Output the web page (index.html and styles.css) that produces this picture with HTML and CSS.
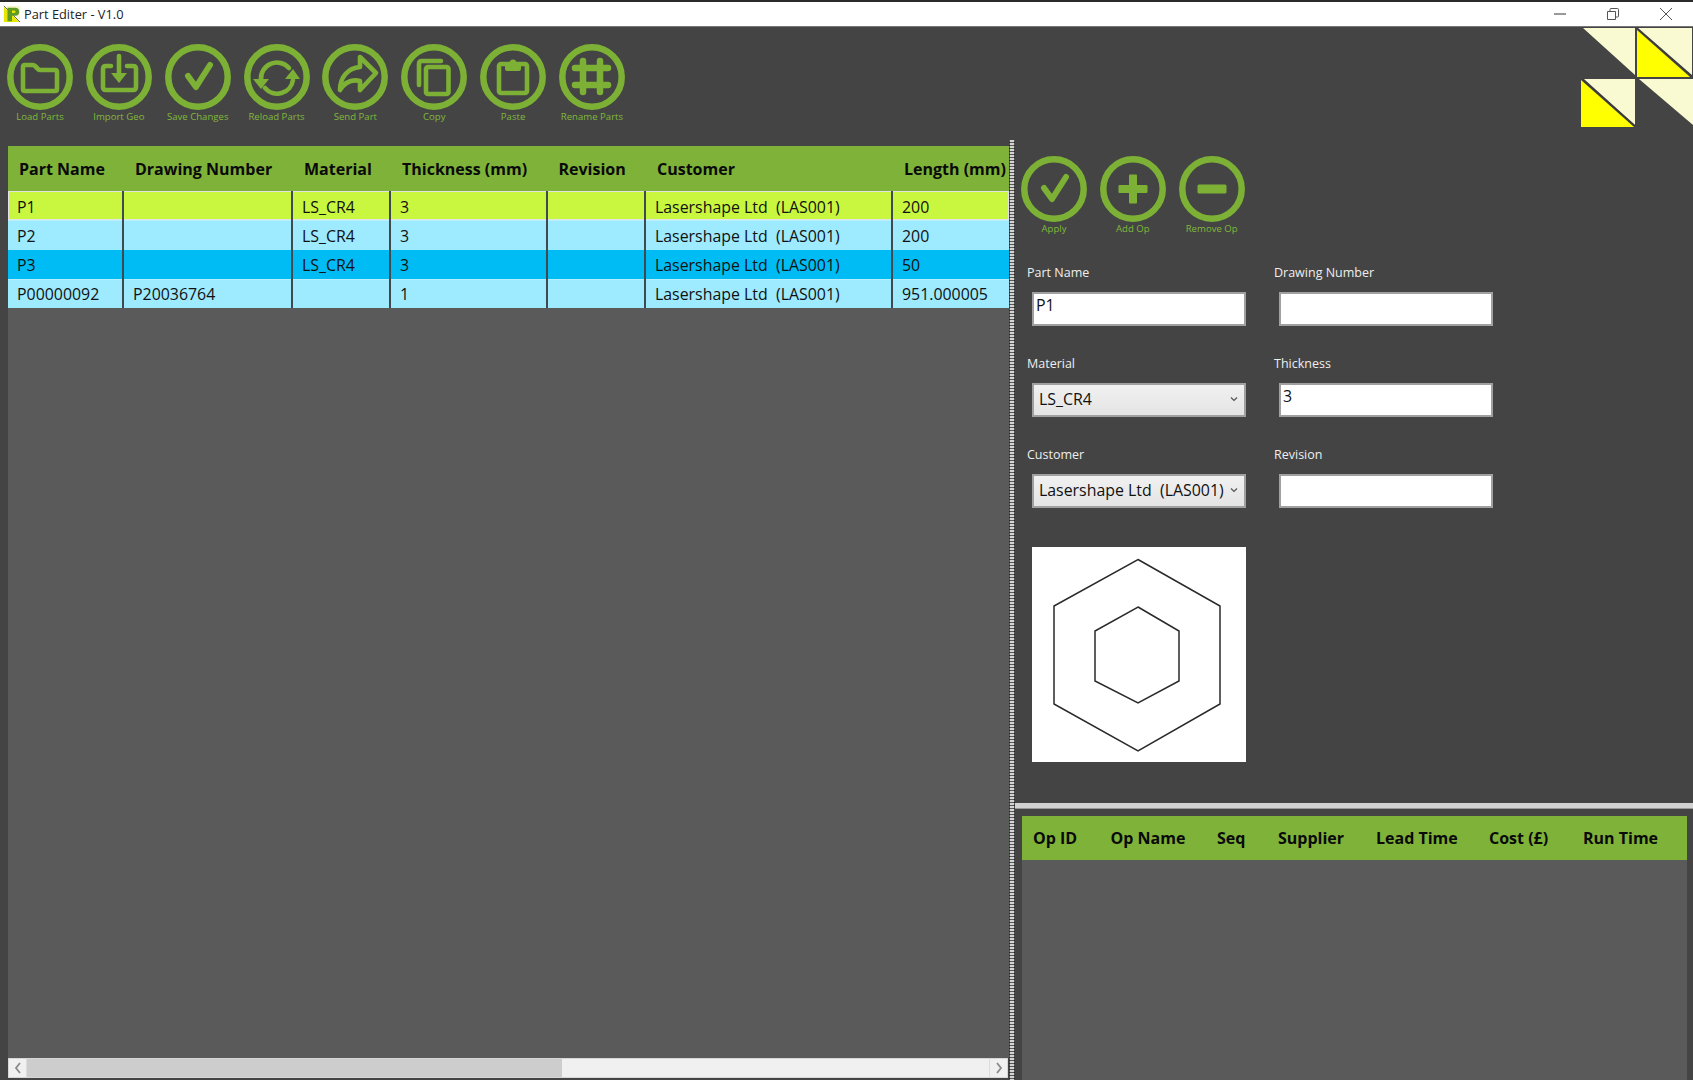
FILE: index.html
```html
<!DOCTYPE html>
<html lang="en">
<head>
<meta charset="utf-8">
<title>Part Editer - V1.0</title>
<link rel="stylesheet" href="styles.css">
</head>
<body>
<div class="window">
  <header class="titlebar">
    <svg class="app-icon" viewBox="0 0 20 20" aria-hidden="true">
      <path d="M1 2 18 19H1Z" fill="#e6e600"/>
      <path d="M3 1H19V17Z" fill="#f5f5c8"/>
      <path d="M1 1 19 19" stroke="#555" stroke-width="1"/>
      <path d="M5 3h8.500a4.500 4.500 0 0 1 0 9H10V18H5Z" fill="#5f9a25"/>
      <path d="M10 6h2.500a1.300 1.300 0 0 1 0 2.800H10Z" fill="#e6e600"/>
    </svg>
    <span class="title-text">Part Editer - V1.0</span>
    <div class="win-buttons">
      <svg class="win-btn" viewBox="0 0 12 12"><path d="M0 6H12" stroke="#777" stroke-width="1.500" fill="none"/></svg>
      <svg class="win-btn" viewBox="0 0 12 12"><path d="M.5 3.500H8.500V11.500H.5ZM3 3.500V1.500Q3 .5 4 .5H10.500Q11.500 .5 11.500 1.500V8Q11.500 9 10.500 9H8.500" stroke="#555" fill="none"/></svg>
      <svg class="win-btn" viewBox="0 0 12 12"><path d="M0 0 12 12M12 0 0 12" stroke="#555" fill="none"/></svg>
    </div>
  </header>

  <section class="toolbar">
    <div class="tool">
      <svg class="tool-icon" viewBox="0 0 66 66"><circle class="ring" cx="33" cy="33" r="29.700"/><path class="line" d="M16 45V23Q16 21 18 21H26Q27 21 28 22L31 25Q32 26 33 26H48Q50 26 50 28V45Q50 47 48 47H18Q16 47 16 45Z"/></svg>
      <span class="tool-label">Load Parts</span>
    </div>
    <div class="tool">
      <svg class="tool-icon" viewBox="0 0 66 66"><circle class="ring" cx="33" cy="33" r="29.700"/><path class="line" d="M25 22H20Q17 22 17 25V43Q17 46 20 46H47Q50 46 50 43V25Q50 22 47 22H41"/><path class="line" d="M33 12V30"/><path class="solid" d="M25 29H41L33 39Z"/></svg>
      <span class="tool-label">Import Geo</span>
    </div>
    <div class="tool">
      <svg class="tool-icon" viewBox="0 0 66 66"><circle class="ring" cx="33" cy="33" r="29.700"/><path class="check" d="M23 32 31 43 45 21"/></svg>
      <span class="tool-label">Save Changes</span>
    </div>
    <div class="tool">
      <svg class="tool-icon" viewBox="0 0 66 66"><circle class="ring" cx="33" cy="33" r="29.700"/><path class="line" d="M17 36A16 16 0 0 1 45 24"/><path class="line" d="M49 36A16 16 0 0 1 21 44"/><path class="solid" d="M9 35H25L17 45Z"/><path class="solid" d="M41 35H56L49 25Z"/></svg>
      <span class="tool-label">Reload Parts</span>
    </div>
    <div class="tool">
      <svg class="tool-icon" viewBox="0 0 66 66"><circle class="ring" cx="33" cy="33" r="29.700"/><path class="line" d="M38 13 54 29 38 46V37C30 35 23 38 18 46 18 33 26 24 38 23Z"/></svg>
      <span class="tool-label">Send Part</span>
    </div>
    <div class="tool">
      <svg class="tool-icon" viewBox="0 0 66 66"><circle class="ring" cx="33" cy="33" r="29.700"/><rect class="line" x="25" y="23" width="22.500" height="27" rx="2"/><path class="line" d="M18 41V20Q18 17 21 17H40"/></svg>
      <span class="tool-label">Copy</span>
    </div>
    <div class="tool">
      <svg class="tool-icon" viewBox="0 0 66 66"><circle class="ring" cx="33" cy="33" r="29.700"/><rect class="line" x="19" y="20" width="28" height="29" rx="2"/><path class="solid" d="M25 19H29.500A3.500 3.500 0 0 1 36.500 19H41V25Q41 27 39 27H27Q25 27 25 25Z"/></svg>
      <span class="tool-label">Paste</span>
    </div>
    <div class="tool">
      <svg class="tool-icon" viewBox="0 0 66 66"><circle class="ring" cx="33" cy="33" r="29.700"/><path class="hash" d="M24 17V48M41 17V48M16 24H49M16 41H49"/></svg>
      <span class="tool-label">Rename Parts</span>
    </div>
    <svg class="logo" viewBox="0 0 112 100" aria-hidden="true">
      <path d="M2 1H54V48Z" fill="#fafad2"/>
      <path d="M56 1H111V49Z" fill="#fafad2"/>
      <path d="M56 3V50H109Z" fill="#ffff00"/>
      <path d="M56 1 111 49" stroke="#3a3a3a" stroke-width="1.500"/>
      <path d="M3 52H54V98Z" fill="#fafad2"/>
      <path d="M0 53V100H53Z" fill="#ffff00"/>
      <path d="M1 52 54 99" stroke="#3a3a3a" stroke-width="1.500"/>
      <path d="M58 52H112V98Z" fill="#fafad2"/>
    </svg>
  </section>

  <main class="workspace">
    <section class="parts-pane">
      <div class="grid-area">
        <div class="parts-row grid-head">
          <div class="head-cell">Part Name</div>
          <div class="head-cell">Drawing Number</div>
          <div class="head-cell">Material</div>
          <div class="head-cell">Thickness (mm)</div>
          <div class="head-cell">Revision</div>
          <div class="head-cell">Customer</div>
          <div class="head-cell">Length (mm)</div>
        </div>
        <div class="parts-row data-row row-current">
          <div class="cell">P1</div><div class="cell"></div><div class="cell">LS_CR4</div><div class="cell">3</div><div class="cell"></div><div class="cell">Lasershape Ltd  (LAS001)</div><div class="cell">200</div>
        </div>
        <div class="parts-row data-row row-plain">
          <div class="cell">P2</div><div class="cell"></div><div class="cell">LS_CR4</div><div class="cell">3</div><div class="cell"></div><div class="cell">Lasershape Ltd  (LAS001)</div><div class="cell">200</div>
        </div>
        <div class="parts-row data-row row-selected">
          <div class="cell">P3</div><div class="cell"></div><div class="cell">LS_CR4</div><div class="cell">3</div><div class="cell"></div><div class="cell">Lasershape Ltd  (LAS001)</div><div class="cell">50</div>
        </div>
        <div class="parts-row data-row row-plain">
          <div class="cell">P00000092</div><div class="cell">P20036764</div><div class="cell"></div><div class="cell">1</div><div class="cell"></div><div class="cell">Lasershape Ltd  (LAS001)</div><div class="cell">951.000005</div>
        </div>
      </div>
      <div class="scrollbar">
        <div class="scroll-btn"><svg viewBox="0 0 8 12"><path d="M6 1 2 6 6 11" class="chev"/></svg></div>
        <div class="scroll-track"><div class="scroll-thumb"></div></div>
        <div class="scroll-btn"><svg viewBox="0 0 8 12"><path d="M2 1 6 6 2 11" class="chev"/></svg></div>
      </div>
    </section>

    <div class="v-splitter"></div>

    <section class="detail-pane">
      <div class="detail-top">
        <div class="detail-tools">
          <div class="tool">
            <svg class="tool-icon" viewBox="0 0 66 66"><circle class="ring" cx="33" cy="33" r="29.700"/><path class="check" d="M23 32 31 43 45 21"/></svg>
            <span class="tool-label">Apply</span>
          </div>
          <div class="tool">
            <svg class="tool-icon" viewBox="0 0 66 66"><circle class="ring" cx="33" cy="33" r="29.700"/><path class="solid" d="M29 19.500Q29 18.500 30 18.500H36Q37 18.500 37 19.500V29H46.500Q47.500 29 47.500 30V36Q47.500 37 46.500 37H37V46.500Q37 47.500 36 47.500H30Q29 47.500 29 46.500V37H19.500Q18.500 37 18.500 36V30Q18.500 29 19.500 29H29Z"/></svg>
            <span class="tool-label">Add Op</span>
          </div>
          <div class="tool">
            <svg class="tool-icon" viewBox="0 0 66 66"><circle class="ring" cx="33" cy="33" r="29.700"/><rect class="solid" x="18.500" y="28.500" width="29" height="9" rx="1.500"/></svg>
            <span class="tool-label">Remove Op</span>
          </div>
        </div>
        <div class="form">
          <div class="field"><div class="field-label">Part Name</div><div class="text-box">P1</div></div>
          <div class="field"><div class="field-label">Drawing Number</div><div class="text-box"></div></div>
          <div class="field"><div class="field-label">Material</div><div class="combo"><span class="combo-text">LS_CR4</span><svg class="combo-arrow" viewBox="0 0 8 6"><path d="M1 1.500 4 4.500 7 1.500" class="combo-chev"/></svg></div></div>
          <div class="field"><div class="field-label">Thickness</div><div class="text-box">3</div></div>
          <div class="field"><div class="field-label">Customer</div><div class="combo"><span class="combo-text">Lasershape Ltd  (LAS001)</span><svg class="combo-arrow" viewBox="0 0 8 6"><path d="M1 1.500 4 4.500 7 1.500" class="combo-chev"/></svg></div></div>
          <div class="field"><div class="field-label">Revision</div><div class="text-box"></div></div>
        </div>
        <svg class="preview" viewBox="1032 547 214 215" aria-label="Part preview">
          <path class="hex" d="M1138 559.500 1220 606V704L1138 751 1054 704V606Z"/>
          <path class="hex" d="M1138 607 1179 631V681L1138 703 1095 681V631Z"/>
        </svg>
      </div>
      <div class="h-splitter"></div>
      <div class="ops-pane">
        <div class="ops-grid">
          <div class="ops-row grid-head">
            <div class="head-cell">Op ID</div>
            <div class="head-cell">Op Name</div>
            <div class="head-cell">Seq</div>
            <div class="head-cell">Supplier</div>
            <div class="head-cell">Lead Time</div>
            <div class="head-cell">Cost (£)</div>
            <div class="head-cell">Run Time</div>
          </div>
        </div>
      </div>
    </section>
  </main>
</div>
</body>
</html>
```

FILE: styles.css
```css
* { box-sizing: border-box; }
html, body { margin: 0; height: 1080px; overflow: hidden; }
body { font-family: "Open Sans", "Noto Sans", sans-serif; color: #111; background: #444; }

.window { height: 1080px; overflow: hidden; display: flex; flex-direction: column; background: #444; }

/* title bar */
.titlebar { height: 27px; flex: none; display: flex; align-items: center; background: #fff; border-top: 2px solid #2a2a2a; border-bottom: 1px solid #777; padding-left: 3px; }
.app-icon { width: 18px; height: 18px; }
.title-text { font-size: 12.800px; margin-left: 3px; color: #222; }
.win-buttons { margin-left: auto; display: flex; gap: 41px; padding-right: 21px; }
.win-btn { width: 12px; height: 12px; display: block; }

/* toolbar */
.toolbar { height: 113px; flex: none; display: flex; padding: 17px 0 0 7px; position: relative; }
.tool { width: 78.850px; flex: none; display: flex; flex-direction: column; align-items: flex-start; }
.tool-icon { width: 66px; height: 66px; display: block; flex: none; }
.tool-label { width: 66px; display: flex; justify-content: center; white-space: nowrap; font-size: 9.600px; line-height: 14px; color: #80b83a; }
.ring { fill: none; stroke: #7cb135; stroke-width: 6.500; }
.line { fill: none; stroke: #7cb135; stroke-width: 4.600; stroke-linecap: round; stroke-linejoin: round; }
.solid { fill: #7cb135; }
.check { fill: none; stroke: #7cb135; stroke-width: 6; stroke-linecap: round; stroke-linejoin: round; }
.hash { fill: none; stroke: #7cb135; stroke-width: 6.500; stroke-linecap: round; }
.logo { position: absolute; top: 0; right: 0; width: 112px; height: 100px; }

/* workspace */
.workspace { flex: 1; min-height: 0; display: flex; }
.parts-pane { width: 1009px; flex: none; padding: 6px 0 2px 8px; display: flex; flex-direction: column; }
.grid-area { flex: 1; min-height: 0; background: #5a5a5a; overflow: hidden; }
.grid-head { height: 45px; background: #7fb238; font-weight: 700; font-size: 16px; color: #0a0a0a; }
.parts-row { display: grid; grid-template-columns: 116px 169px 98px 156.500px 98.500px 247px 116px; }
.head-cell { display: flex; align-items: center; white-space: pre; padding-left: 11px; }
.data-row { height: 29.250px; font-size: 15.900px; }
.cell { display: flex; align-items: center; white-space: pre; padding: 1px 0 0 9px; border-right: 2px solid #3f4a50; overflow: hidden; }
.cell:last-child { border-right: 0; }
.row-current .cell, .row-current + .row-plain .cell { padding-top: 2px; }
.row-current { background: #c9f73f; box-shadow: inset 0 0 0 1px #e3e3e3; }
.row-plain { background: #9eeaff; box-shadow: inset 0 1px 0 #b8effc; }
.row-selected { background: #00bcf5; }

/* scrollbar */
.scrollbar { height: 20px; flex: none; display: flex; background: #f0f0f0; border: 1px solid #d6d6d6; margin-right: 1px; }
.scroll-btn { width: 18px; flex: none; display: flex; align-items: center; justify-content: center; border-right: 1px solid #dcdcdc; }
.scroll-btn:last-child { border-right: 0; border-left: 1px solid #dcdcdc; }
.scroll-btn svg { width: 8px; height: 12px; }
.chev { fill: none; stroke: #8a8a8a; stroke-width: 1.800; }
.scroll-track { flex: 1; }
.scroll-thumb { width: 535px; height: 100%; background: #cdcdcd; }

/* splitters */
.v-splitter { width: 6px; flex: none; background-color: #d4d4d4; background-image: repeating-linear-gradient(180deg, transparent 0 2px, #6a6a6a 2px 3px), linear-gradient(90deg, #666 0 1px, transparent 1px 5px, #666 5px); background-blend-mode: multiply; }
.h-splitter { height: 6px; flex: none; background: #d2d2d2; border-bottom: 1px solid #999; }

/* detail */
.detail-pane { flex: 1; min-width: 0; display: flex; flex-direction: column; }
.detail-top { height: 663px; flex: none; padding: 16px 0 0 6px; }
.detail-tools { display: flex; height: 107px; }
.form { display: grid; grid-template-columns: 247px 247px; grid-auto-rows: 91px; padding-left: 6px; }
.field { display: flex; flex-direction: column; }
.field-label { height: 20px; line-height: 20px; font-size: 12.500px; color: #eee; white-space: nowrap; }
.text-box { width: 214px; height: 34px; margin: 9px 0 0 5px; background: #fff; border: 2px solid #a0a0a0; font-size: 15.900px; line-height: 22px; padding: 0 0 0 2px; color: #111; }
.combo { width: 214px; height: 34px; margin: 9px 0 0 5px; display: flex; align-items: center; border: 2px solid #a0a0a0; background: linear-gradient(#f1f1f1, #e4e4e4); font-size: 15.900px; padding: 0 0 2px 5px; color: #111; }
.combo-text { width: 188px; flex: none; white-space: pre; }
.combo-arrow { width: 8px; height: 6px; margin-left: 3px; flex: none; }
.combo-chev { fill: none; stroke: #555; stroke-width: 1.200; }
.preview { display: block; width: 214px; height: 215px; margin: 11px 0 0 11px; background: #fff; }
.hex { fill: none; stroke: #2a2a2a; stroke-width: 1.500; }

/* operations */
.ops-pane { flex: 1; min-height: 0; padding: 7px 6px 0 7px; }
.ops-grid { height: 100%; background: #5a5a5a; }
.ops-row { display: grid; grid-template-columns: 77.500px 106.500px 61px 98px 113px 94px 1fr; height: 44px; }
```
